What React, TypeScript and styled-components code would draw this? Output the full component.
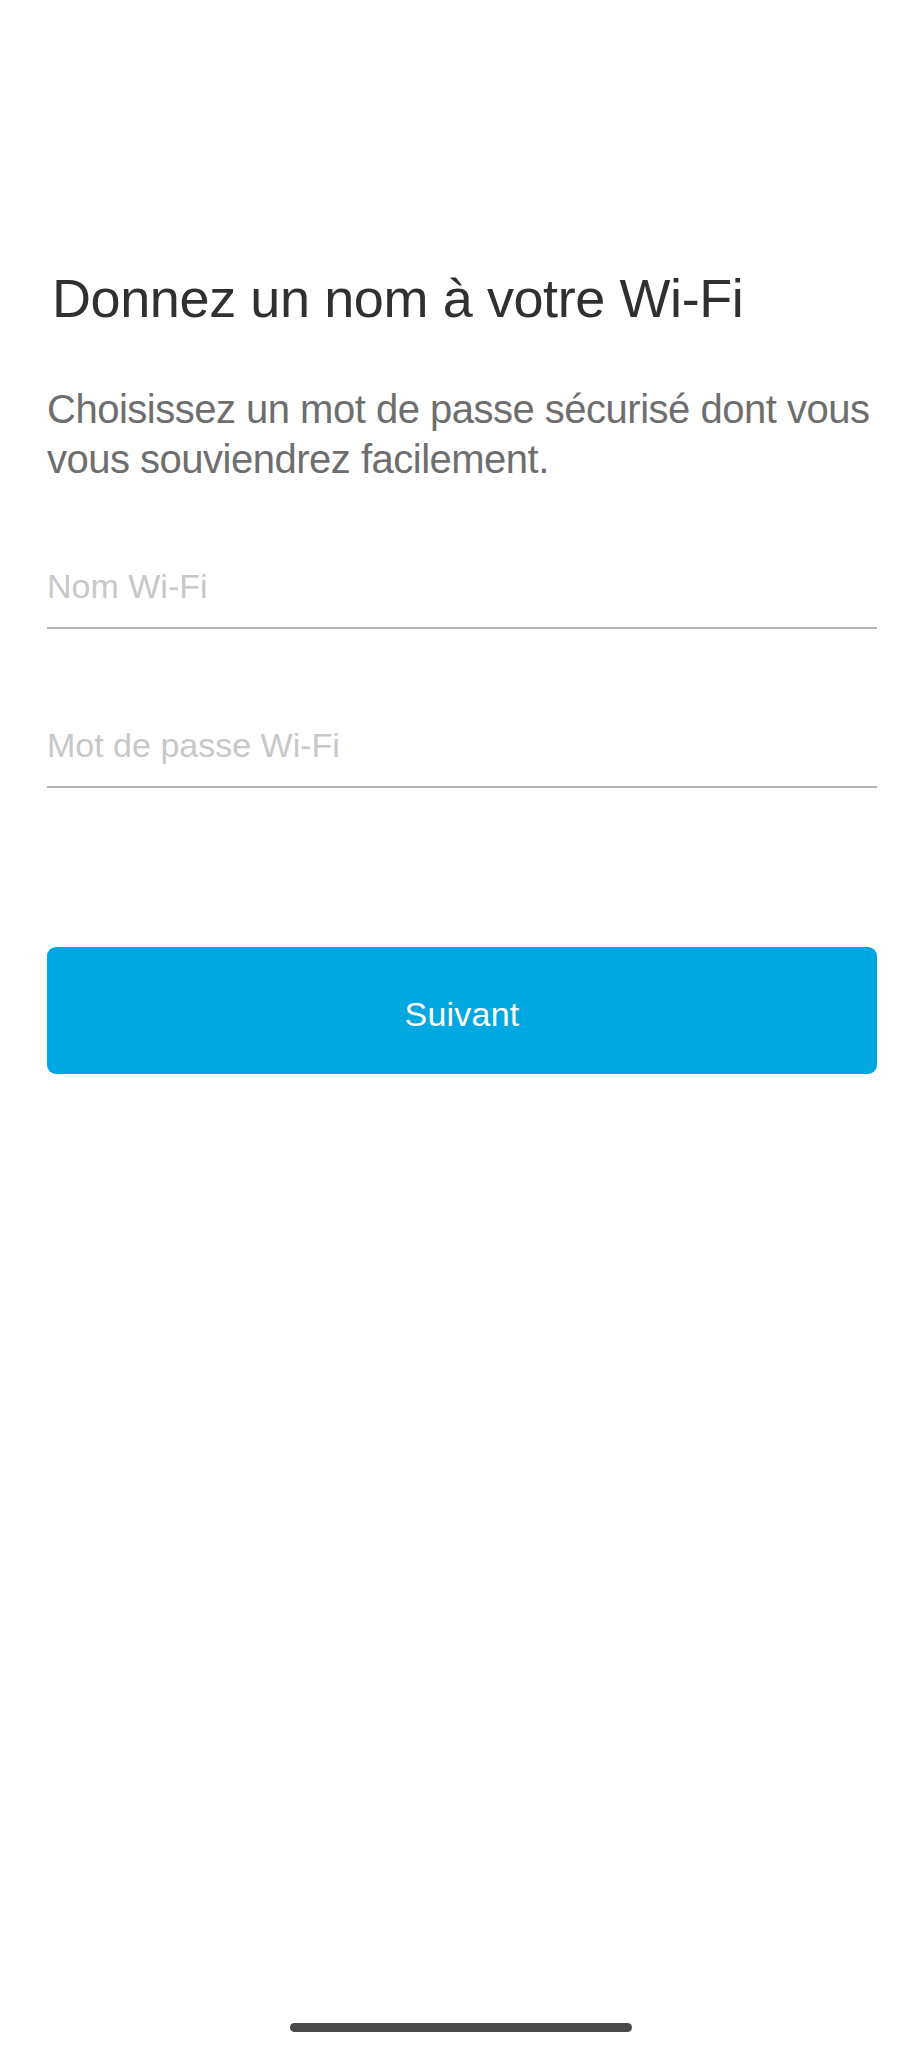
import React from "react";
import styled, { createGlobalStyle } from "styled-components";

const GlobalStyle = createGlobalStyle`
  html, body {
    margin: 0;
    padding: 0;
    background: #ffffff;
  }
  body {
    font-family: "Liberation Sans", Arial, sans-serif;
  }
  * { box-sizing: border-box; }
`;

const Screen = styled.div`
  width: 922px;
  min-height: 2048px;
  display: flex;
  flex-direction: column;
  padding: 266px 45px 16px 47px;
  background: #ffffff;
`;

const Title = styled.h1`
  margin: 0;
  font-family: "Liberation Sans", Arial, sans-serif;
  font-weight: 400;
  font-size: 54px;
  line-height: 64px;
  letter-spacing: -0.4px;
  color: #303030;
  padding-left: 5px;
`;

const Subtitle = styled.p`
  margin: 54px 0 0 0;
  font-size: 40px;
  line-height: 50px;
  letter-spacing: -0.5px;
  color: #6e6e6e;
`;

const Field = styled.label<{ $gap: number }>`
  display: block;
  margin-top: ${(p) => p.$gap}px;
  padding-bottom: 21px;
  border-bottom: 2px solid #b4b4b4;
`;

const Input = styled.input`
  display: block;
  width: 100%;
  border: none;
  outline: none;
  padding: 0;
  margin: 0;
  background: transparent;
  font-family: "Liberation Sans", Arial, sans-serif;
  font-size: 34px;
  line-height: 40px;
  height: 40px;
  letter-spacing: 0;
  color: #333333;
  &::placeholder {
    color: #c8c8c8;
  }
`;

const Button = styled.button`
  margin-top: 159px;
  height: 127px;
  width: 100%;
  border: none;
  border-radius: 9px;
  padding: 8px 0 0 0;
  background: #00a8e1;
  color: #ffffff;
  font-family: "Liberation Sans", Arial, sans-serif;
  font-size: 34px;
  letter-spacing: 0.2px;
  cursor: pointer;
`;

const HomeIndicator = styled.div`
  margin-top: auto;
  align-self: center;
  width: 342px;
  height: 9px;
  border-radius: 5px;
  background: #4a4a4a;
  transform: translateX(-1px);
`;

export default function App() {
  return (
    <>
      <GlobalStyle />
      <Screen>
        <Title>Donnez un nom à votre Wi-Fi</Title>
        <Subtitle>
          Choisissez un mot de passe sécurisé dont vous vous souviendrez facilement.
        </Subtitle>
        <Field $gap={82}>
          <Input type="text" placeholder="Nom Wi-Fi" />
        </Field>
        <Field $gap={96}>
          <Input type="text" placeholder="Mot de passe Wi-Fi" />
        </Field>
        <Button type="button">Suivant</Button>
        <HomeIndicator />
      </Screen>
    </>
  );
}
